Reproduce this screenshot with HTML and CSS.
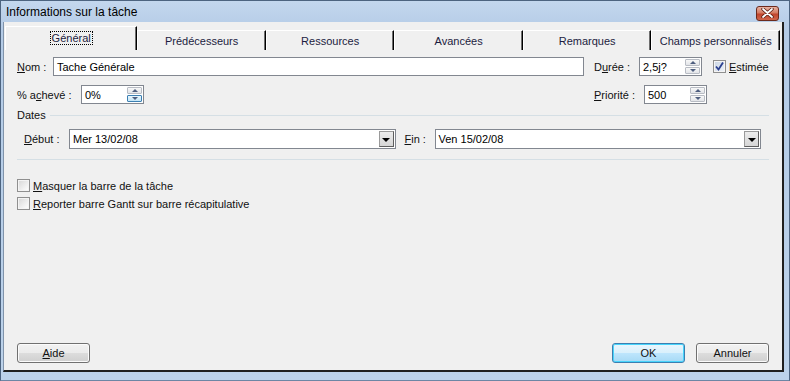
FILE: index.html
```html
<!DOCTYPE html>
<html lang="fr">
<head>
<meta charset="utf-8">
<title>Informations sur la tâche</title>
<link rel="stylesheet" href="styles.css">
</head>
<body>
<div class="window">
  <div class="titlebar">
    <span class="title">Informations sur la tâche</span>
    <span class="close">
      <svg width="13" height="10" viewBox="0 0 13 10"><path d="M2 1 L11 9 M11 1 L2 9" stroke="#5a2014" stroke-width="3.4" stroke-linecap="round"/><path d="M2 1 L11 9 M11 1 L2 9" stroke="#fff" stroke-width="1.8" stroke-linecap="round"/></svg>
    </span>
  </div>
  <div class="client">
    <div class="tabs">
      <div class="tab selected"><span class="focus">Général</span></div>
      <div class="tab">Prédécesseurs</div>
      <div class="tab">Ressources</div>
      <div class="tab">Avancées</div>
      <div class="tab">Remarques</div>
      <div class="tab">Champs personnalisés</div>
    </div>

    <div class="panel">
      <div class="row">
        <span class="lbl w-nom"><u>N</u>om :</span>
        <span class="field grow">Tache Générale</span>
        <span class="lbl w-duree">D<u>u</u>rée :</span>
        <span class="field spin"><span class="val">2,5j?</span><span class="spinbtns"><span class="up"></span><span class="down"></span></span></span>
        <span class="check estimee"><span class="box on"><svg width="11" height="11" viewBox="0 0 11 11"><path d="M2 5.5 L4.5 8.5 L9 1.5" fill="none" stroke="#2a3f8f" stroke-width="1.8"/></svg></span><span><u>E</u>stimée</span></span>
      </div>
      <div class="row second">
        <span class="lbl w-acheve">% a<u>c</u>hevé :</span>
        <span class="field spin"><span class="val">0%</span><span class="spinbtns"><span class="up"></span><span class="down hot"></span></span></span>
        <span class="grow"></span>
        <span class="lbl w-prio"><u>P</u>riorité :</span>
        <span class="field spin"><span class="val">500</span><span class="spinbtns"><span class="up"></span><span class="down"></span></span></span>
        <span class="end-gap"></span>
      </div>

      <div class="group-head"><span>Dates</span><span class="rule"></span></div>
      <div class="row dates">
        <span class="lbl w-debut"><u>D</u>ébut :</span>
        <span class="field combo"><span class="val">Mer 13/02/08</span><span class="drop"></span></span>
        <span class="lbl w-fin"><u>F</u>in :</span>
        <span class="field combo"><span class="val">Ven 15/02/08</span><span class="drop"></span></span>
      </div>
      <div class="separator"></div>

      <div class="checks">
        <span class="check"><span class="box"></span><span><u>M</u>asquer la barre de la tâche</span></span>
        <span class="check"><span class="box"></span><span><u>R</u>eporter barre Gantt sur barre récapitulative</span></span>
      </div>
    </div>

    <div class="buttons">
      <span class="btn"><span><u>A</u>ide</span></span>
      <span class="grow"></span>
      <span class="btn default">OK</span>
      <span class="btn">Annuler</span>
    </div>
  </div>
</div>
</body>
</html>
```

FILE: styles.css
```css
html, body {
margin: 0;
padding: 0;
}

body {
background: #f0f0f0;
font-family: "Liberation Sans", Arial, sans-serif;
font-size: 11px;
color: #111;
}

u {
text-decoration: underline;
text-underline-offset: 1px;
}

.window {
width: 790px;
height: 381px;
box-sizing: border-box;
border: 1px solid #4d6480;
border-bottom-color: #6d86a5;
background: linear-gradient(#c3d7ee, #b4cbe6 30px, #bcd2ea);
display: flex;
flex-direction: column;
}

/* title bar */
.titlebar {
height: 21px;
flex: none;
display: flex;
align-items: center;
padding: 0 10px 0 5px;
}

.title {
font-size: 12px;
color: #000;
flex: 1;
}

.close {
width: 21px;
height: 13px;
border: 1px solid #6b2a1c;
border-radius: 3px;
background: linear-gradient(#e8b3a2, #d47a61 45%, #c1442c 55%, #d0664b);
display: flex;
align-items: center;
justify-content: center;
margin-top: 3px;
}

/* client area */
.client {
flex: 1;
margin: 0 5px 8px 2px;
background: #f0f0f0;
border-left: 1px solid #8093aa;
border-right: 2px solid #1f1f1f;
border-bottom: 2px solid #1f1f1f;
display: flex;
flex-direction: column;
padding: 4px 0 0 1px;
}

/* tabs */
.tabs {
display: flex;
align-items: flex-end;
height: 23px;
margin-right: 2px;
border-bottom: 1px solid #fff;
flex: none;
}

.tab {
flex: 1;
height: 20px;
box-sizing: border-box;
border-top: 1px solid #fff;
border-left: 1px solid #fff;
border-right: 1px solid #000;
box-shadow: inset -1px 0 #6e6e6e;
display: flex;
align-items: center;
justify-content: center;
color: #1c1c40;
font-size: 11px;
margin-bottom: -1px;
background: #f0f0f0;
}

.tab.selected {
height: 24px;
flex: 1.03;
padding-bottom: 2px;
}

.focus {
outline: 1px dotted #000;
padding: 0 1px;
}

/* form */
.panel {
padding: 7px 13px 0 12px;
}

.row {
display: flex;
align-items: center;
height: 19px;
}

.row.second {
margin-top: 9px;
}

.grow {
flex: 1;
}

.lbl {
flex: none;
white-space: nowrap;
}

.w-nom { width: 36px; }
.w-duree { width: 45px; margin-left: 10px; }
.w-acheve { width: 64px; }
.w-prio { width: 50px; }
.w-debut { width: 45px; }
.w-fin { width: 30px; margin-left: 9px; }

.end-gap {
width: 62px;
flex: none;
}

.field {
height: 19px;
box-sizing: border-box;
border: 1px solid #828790;
background: #fff;
display: flex;
align-items: center;
padding-left: 3px;
white-space: nowrap;
color: #000;
}

.val {
flex: 1;
}

.spin {
width: 63px;
flex: none;
padding: 1px 1px 1px 3px;
}

.spinbtns {
width: 15px;
height: 15px;
display: flex;
flex-direction: column;
gap: 1px;
}

.spinbtns span {
flex: 1;
box-sizing: border-box;
border: 1px solid #b8bcc4;
border-radius: 1px;
background: linear-gradient(#f8f8f8, #e2e4e8);
display: flex;
align-items: center;
justify-content: center;
}

.spinbtns span.hot {
border-color: #3c7fb1;
background: linear-gradient(#eaf6fd, #c4e5f6);
}

.spinbtns .up::after {
content: "";
border-left: 3px solid transparent;
border-right: 3px solid transparent;
border-bottom: 3px solid #4e5e7f;
}

.spinbtns .down::after {
content: "";
border-left: 3px solid transparent;
border-right: 3px solid transparent;
border-top: 3px solid #4e5e7f;
}

/* checkboxes */
.check {
display: flex;
align-items: center;
gap: 3px;
white-space: nowrap;
height: 13px;
}

.check.estimee {
width: 56px;
flex: none;
margin-left: 11px;
}

.box {
width: 13px;
height: 13px;
box-sizing: border-box;
border: 1px solid #8f8f8f;
background: linear-gradient(135deg, #d6d6d6, #f4f4f4 70%, #fff);
box-shadow: inset 0 0 0 1px #f4f4f4;
display: flex;
align-items: center;
justify-content: center;
flex: none;
}

.box.on {
background: linear-gradient(135deg, #c9d4e4, #eef2f8);
}

/* dates group */
.group-head {
display: flex;
align-items: center;
height: 12px;
margin-top: 5px;
}

.group-head .rule {
flex: 1;
margin-left: 4px;
border-top: 1px solid #d5dfe5;
}

.row.dates {
margin-top: 8px;
padding: 0 8px 0 7px;
height: 20px;
}

.combo {
flex: 1;
height: 20px;
padding: 1px 1px 1px 3px;
}

.drop {
width: 15px;
height: 16px;
box-sizing: border-box;
border: 1px solid #9a9a9a;
border-right-color: #5e5e5e;
border-bottom-color: #5e5e5e;
background: linear-gradient(#ececec, #d6d6d6);
display: flex;
align-items: center;
justify-content: center;
}

.drop::after {
content: "";
border-left: 4px solid transparent;
border-right: 4px solid transparent;
border-top: 4px solid #000;
margin-top: 1px;
}

.separator {
margin-top: 10px;
border-top: 1px solid #d5dfe5;
}

.checks {
margin-top: 19px;
display: flex;
flex-direction: column;
gap: 5px;
}

/* buttons */
.buttons {
margin-top: auto;
display: flex;
gap: 11px;
padding: 0 13px 7px 12px;
}

.btn {
width: 73px;
height: 20px;
box-sizing: border-box;
border: 1px solid #707070;
border-radius: 3px;
background: linear-gradient(#f2f2f2, #ebebeb 50%, #dddddd 50%, #cfcfcf);
box-shadow: inset 0 0 0 1px #fbfbfb;
display: flex;
align-items: center;
justify-content: center;
color: #111;
}

.btn.default {
border-color: #3c7fb1;
background: linear-gradient(#eaf6fd, #d9f0fc 50%, #bee6fd 50%, #a7d9f5);
box-shadow: inset 0 0 0 1px #48d4fb;
}
```
